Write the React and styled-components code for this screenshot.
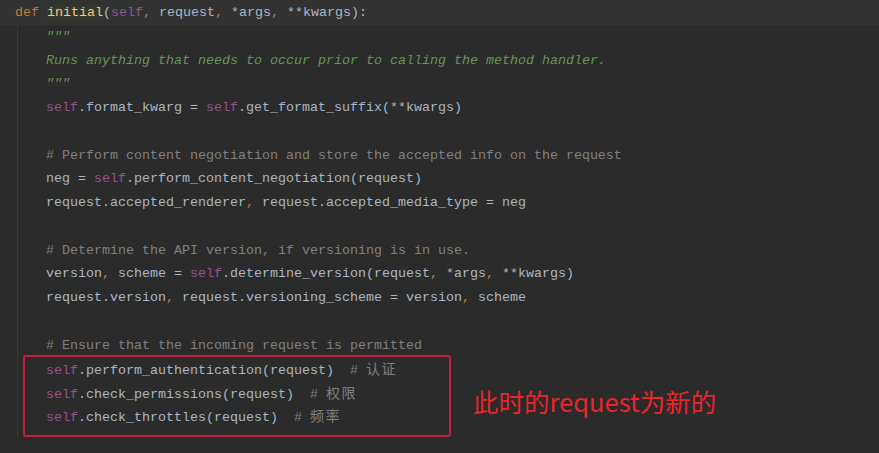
import React from "react";
import styled, { createGlobalStyle } from "styled-components";

const Global = createGlobalStyle`
  html, body { margin: 0; padding: 0; background: #2b2b2b; }
  body { width: 879px; height: 453px; overflow: hidden; }
`;

const C = {
  text: "#a9b7c6",
  kw: "#cc7832",
  fn: "#ffc66d",
  self: "#94558d",
  doc: "#629755",
  comment: "#808080",
};

const Editor = styled.div`
  box-sizing: border-box;
  width: 879px;
  height: 453px;
  padding-top: 1px;
  background: #2b2b2b;
  font-family: "Liberation Mono", "DejaVu Sans Mono", monospace;
  font-size: 13.33px;
  color: ${C.text};
  white-space: pre;
  display: flex;
  flex-direction: column;
`;

const Line = styled.div`
  height: 23.75px;
  line-height: 23.75px;
  padding-left: ${(p) => p.$pad ?? 22}px;
  background: ${(p) => (p.$current ? "#323232" : "transparent")};
`;

const CurrentLine = styled(Line)`
  margin-top: -1px;
  padding-top: 1px;
`;

const Body = styled.div`
  margin-left: 17px;
  border-left: 1px solid #393939;
  padding-left: 6px;
  display: flex;
  flex-direction: column;
`;

const Kw = styled.span`color: ${C.kw};`;
const Fn = styled.span`
  color: ${C.fn};
  background: #33392f;
`;
const Self = styled.span`color: ${C.self};`;
const Doc = styled.span`
  color: ${C.doc};
  font-style: italic;
`;
const Cm = styled.span`color: ${C.comment};`;
const Cjk = styled.span`
  font-family: "Noto Sans CJK SC", sans-serif;
  font-size: 14px;
  letter-spacing: 1.5px;
`;

const AnnotatedRow = styled.div`
  display: flex;
  align-items: flex-start;
`;

const Box = styled.div`
  box-sizing: border-box;
  width: 428px;
  height: 82px;
  margin-top: -2.5px;
  margin-left: -1px;
  border: 2px solid #c4203d;
  border-radius: 3px;
  display: flex;
  flex-direction: column;
`;

const BoxLine = styled(Line)`
  padding-left: 21px;
`;

const Note = styled.div`
  margin-left: 22px;
  margin-top: 28px;
  font-family: "Noto Sans CJK SC", "Noto Sans", sans-serif;
  font-size: 25.5px;
  line-height: 32px;
  color: #e8262b;
  white-space: nowrap;
`;

export default function App() {
  return (
    <>
      <Global />
      <Editor>
        <CurrentLine $current $pad={15}>
          <Kw>def</Kw> <Fn>initial</Fn>(<Self>self</Self><Kw>,</Kw> request<Kw>,</Kw> *args<Kw>,</Kw> **kwargs):
        </CurrentLine>
        <Body>
          <Line><Doc>"""</Doc></Line>
          <Line><Doc>Runs anything that needs to occur prior to calling the method handler.</Doc></Line>
          <Line><Doc>"""</Doc></Line>
          <Line><Self>self</Self>.format_kwarg = <Self>self</Self>.get_format_suffix(**kwargs)</Line>
          <Line> </Line>
          <Line><Cm># Perform content negotiation and store the accepted info on the request</Cm></Line>
          <Line>neg = <Self>self</Self>.perform_content_negotiation(request)</Line>
          <Line>request.accepted_renderer<Kw>,</Kw> request.accepted_media_type = neg</Line>
          <Line> </Line>
          <Line><Cm># Determine the API version, if versioning is in use.</Cm></Line>
          <Line>version<Kw>,</Kw> scheme = <Self>self</Self>.determine_version(request<Kw>,</Kw> *args<Kw>,</Kw> **kwargs)</Line>
          <Line>request.version<Kw>,</Kw> request.versioning_scheme = version<Kw>,</Kw> scheme</Line>
          <Line> </Line>
          <Line><Cm># Ensure that the incoming request is permitted</Cm></Line>
          <AnnotatedRow>
            <Box>
              <BoxLine><Self>self</Self>.perform_authentication(request)  <Cm># <Cjk>认证</Cjk></Cm></BoxLine>
              <BoxLine><Self>self</Self>.check_permissions(request)  <Cm># <Cjk>权限</Cjk></Cm></BoxLine>
              <BoxLine><Self>self</Self>.check_throttles(request)  <Cm># <Cjk>频率</Cjk></Cm></BoxLine>
            </Box>
            <Note>此时的request为新的</Note>
          </AnnotatedRow>
        </Body>
      </Editor>
    </>
  );
}
